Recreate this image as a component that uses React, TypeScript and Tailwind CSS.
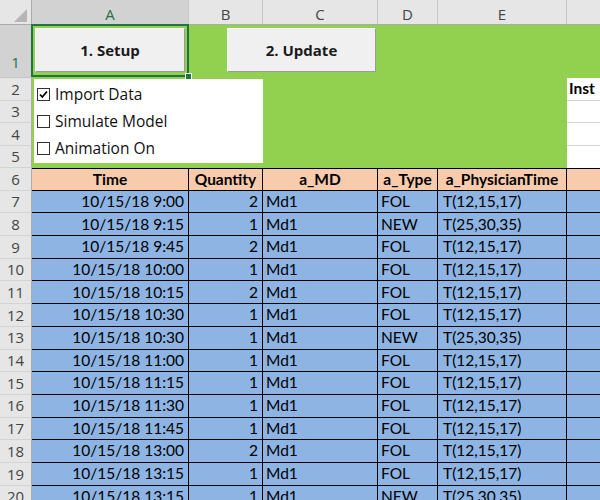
import React from "react";

type Row = { n: number; time: string; qty: number; md: string; type: string; pt: string };

const ROWS: Row[] = [
  { n: 7, time: "10/15/18 9:00", qty: 2, md: "Md1", type: "FOL", pt: "T(12,15,17)" },
  { n: 8, time: "10/15/18 9:15", qty: 1, md: "Md1", type: "NEW", pt: "T(25,30,35)" },
  { n: 9, time: "10/15/18 9:45", qty: 2, md: "Md1", type: "FOL", pt: "T(12,15,17)" },
  { n: 10, time: "10/15/18 10:00", qty: 1, md: "Md1", type: "FOL", pt: "T(12,15,17)" },
  { n: 11, time: "10/15/18 10:15", qty: 2, md: "Md1", type: "FOL", pt: "T(12,15,17)" },
  { n: 12, time: "10/15/18 10:30", qty: 1, md: "Md1", type: "FOL", pt: "T(12,15,17)" },
  { n: 13, time: "10/15/18 10:30", qty: 1, md: "Md1", type: "NEW", pt: "T(25,30,35)" },
  { n: 14, time: "10/15/18 11:00", qty: 1, md: "Md1", type: "FOL", pt: "T(12,15,17)" },
  { n: 15, time: "10/15/18 11:15", qty: 1, md: "Md1", type: "FOL", pt: "T(12,15,17)" },
  { n: 16, time: "10/15/18 11:30", qty: 1, md: "Md1", type: "FOL", pt: "T(12,15,17)" },
  { n: 17, time: "10/15/18 11:45", qty: 1, md: "Md1", type: "FOL", pt: "T(12,15,17)" },
  { n: 18, time: "10/15/18 13:00", qty: 2, md: "Md1", type: "FOL", pt: "T(12,15,17)" },
  { n: 19, time: "10/15/18 13:15", qty: 1, md: "Md1", type: "FOL", pt: "T(12,15,17)" },
  { n: 20, time: "10/15/18 13:15", qty: 1, md: "Md1", type: "NEW", pt: "T(25,30,35)" },
];

const rowHead =
  "w-[32px] shrink-0 flex items-center justify-center bg-[#e6e6e6] border-r border-r-[#ababab] border-b border-b-[#d4d4d4] text-[#444] font-['Open_Sans',sans-serif] text-[15px]";

function Checkbox({ label, checked }: { label: string; checked?: boolean }) {
  return (
    <div className="flex items-center h-[27px]">
      <div className="w-[13px] h-[13px] border border-[#333] bg-white flex items-center justify-center shrink-0">
        {checked && (
          <svg width="11" height="11" viewBox="0 0 11 11">
            <path d="M2 5.5 L4.3 8 L9 2.5" fill="none" stroke="#000" strokeWidth="1.8" />
          </svg>
        )}
      </div>
      <span className="ml-[5px] text-[15.5px] text-[#111] font-['Open_Sans',sans-serif] leading-none">
        {label}
      </span>
    </div>
  );
}

function SheetButton({ label, className }: { label: string; className: string }) {
  return (
    <div
      className={
        "absolute top-[28px] h-[44px] flex items-center justify-center bg-[#f0f0f0] border border-t-[#fafafa] border-l-[#fafafa] border-r-[#9a9a9a] border-b-[#9a9a9a] font-['Open_Sans',sans-serif] font-bold text-[15px] text-[#1a1a1a] " +
        className
      }
    >
      {label}
    </div>
  );
}

export default function App() {
  return (
    <div className="relative w-[600px] h-[500px] overflow-hidden bg-white font-['Lato',sans-serif] text-[15.5px] text-black">
      {/* Column letters */}
      <div className="flex h-[25px] bg-[#e6e6e6] border-b border-[#ababab] font-['Open_Sans',sans-serif] text-[15px] text-[#444]">
        <div className="w-[32px] shrink-0 border-r border-[#ababab] flex items-end justify-end pr-[4px] pb-[2px]">
          <svg width="13" height="13" viewBox="0 0 13 13">
            <polygon points="13,0 13,13 0,13" fill="#b5b5b5" />
          </svg>
        </div>
        <div className="w-[157px] shrink-0 flex items-center justify-center pt-1 bg-[#d2d2d2] text-[#217346] border-r border-[#c6c6c6]">A</div>
        <div className="w-[74px] shrink-0 flex items-center justify-center pt-1 border-r border-[#c6c6c6]">B</div>
        <div className="w-[115px] shrink-0 flex items-center justify-center pt-1 border-r border-[#c6c6c6]">C</div>
        <div className="w-[60px] shrink-0 flex items-center justify-center pt-1 border-r border-[#c6c6c6]">D</div>
        <div className="w-[129px] shrink-0 flex items-center justify-center pt-1 border-r border-[#c6c6c6]">E</div>
        <div className="flex-1" />
      </div>

      {/* Rows 1-5: control area */}
      <div className="flex h-[53px]">
        <div className="w-[32px] shrink-0 flex items-end justify-center pb-[4px] bg-[#d2d2d2] border-r border-r-[#ababab] border-b border-b-[#c6c6c6] text-[#217346] font-['Open_Sans',sans-serif] text-[15px]">
          1
        </div>
        <div className="flex-1 bg-[#92d050]" />
      </div>
      {[2, 3, 4, 5].map((n) => (
        <div key={n} className="flex h-[22.5px]">
          <div className={rowHead}>{n}</div>
          <div className="w-[535px] shrink-0 bg-[#92d050]" />
          <div
            className={
              "flex-1 bg-white flex items-center pl-[2px] font-bold " +
              (n < 5 ? "border-b border-[#d4d4d4]" : "")
            }
          >
            {n === 2 ? "Inst" : ""}
          </div>
        </div>
      ))}

      {/* Table header */}
      <div className="flex h-[22.7px]">
        <div className={rowHead}>6</div>
        <div className="flex flex-1 bg-[#f8cbad] border-t border-black font-bold">
          <div className="w-[157px] shrink-0 flex items-center justify-center border-r border-b border-black">Time</div>
          <div className="w-[74px] shrink-0 flex items-center justify-center border-r border-b border-black">Quantity</div>
          <div className="w-[115px] shrink-0 flex items-center justify-center border-r border-b border-black">a_MD</div>
          <div className="w-[60px] shrink-0 flex items-center justify-center border-r border-b border-black">a_Type</div>
          <div className="w-[129px] shrink-0 flex items-center justify-center border-r border-b border-black">a_PhysicianTime</div>
          <div className="flex-1 border-b border-black" />
        </div>
      </div>

      {/* Data rows */}
      {ROWS.map((r) => (
        <div key={r.n} className="flex h-[22.7px]">
          <div className={rowHead}>{r.n}</div>
          <div className="flex flex-1 bg-[#8db4e2]">
            <div className="w-[157px] shrink-0 flex items-center justify-end pr-[4px] border-r border-b border-black">{r.time}</div>
            <div className="w-[74px] shrink-0 flex items-center justify-end pr-[4px] border-r border-b border-black">{r.qty}</div>
            <div className="w-[115px] shrink-0 flex items-center pl-[3px] border-r border-b border-black">{r.md}</div>
            <div className="w-[60px] shrink-0 flex items-center pl-[3px] border-r border-b border-black">{r.type}</div>
            <div className="w-[129px] shrink-0 flex items-center pl-[5px] border-r border-b border-black">{r.pt}</div>
            <div className="flex-1 border-b border-black" />
          </div>
        </div>
      ))}

      {/* Form controls floating over the sheet */}
      <SheetButton label="1. Setup" className="left-[35px] w-[150px]" />
      <SheetButton label="2. Update" className="left-[227px] w-[149px]" />

      <div className="absolute left-[34px] top-[79px] w-[229px] h-[84px] bg-white pl-[3px] pt-[2px]">
        <Checkbox label="Import Data" checked />
        <Checkbox label="Simulate Model" />
        <Checkbox label="Animation On" />
      </div>

      {/* Active cell selection */}
      <div className="absolute left-[31px] top-[24px] w-[158px] h-[53px] border-2 border-[#217346] pointer-events-none" />
      <div className="absolute left-[185px] top-[73px] w-[7px] h-[7px] bg-[#217346] border border-white" />
    </div>
  );
}
